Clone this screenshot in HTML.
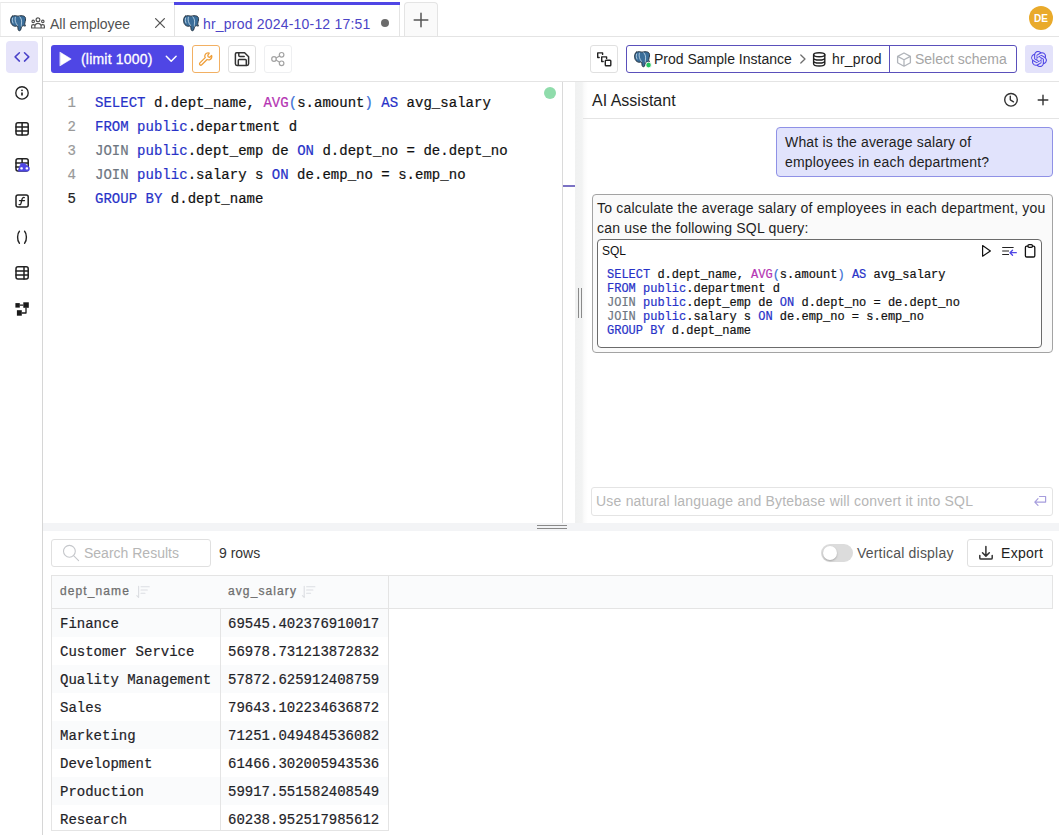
<!DOCTYPE html>
<html><head><meta charset="utf-8">
<style>
*{box-sizing:border-box;margin:0;padding:0}
html,body{width:1059px;height:835px;overflow:hidden;background:#fff;font-family:"Liberation Sans",sans-serif;color:#1e1e1e}
.a{position:absolute}
.mono{font-family:"Liberation Mono",monospace;-webkit-text-stroke:0.2px currentColor}
.ln{position:absolute;height:1px;background:#e4e4e4}
.vl{position:absolute;width:1px;background:#e4e4e4}
.btn{position:absolute;border:1px solid #e0e0e0;border-radius:3px;background:#fff}
.t{position:absolute;white-space:pre;line-height:1}
svg{position:absolute;overflow:visible}
.kw{color:#2832c8}
.fn{color:#b534b3}
.pn{color:#3b6fd6}
.gy{color:#6e7681}
.cell{font-size:14px;color:#1f2328}
</style></head><body>

<!-- ===== TAB BAR ===== -->
<div class="ln" style="left:0;top:36px;width:1059px"></div>
<!-- tab 1 -->
<div class="a" style="left:0px;top:2px;width:175px;height:34px;border:1px solid #e8e8e8;border-left-color:#f0f0f0;border-bottom:none;background:#fff"></div>
<div class="t" id="tab1" style="left:50px;top:17px;font-size:14px;color:#525252">All employee</div>
<!-- active tab -->
<div class="a" style="left:174px;top:2px;width:226px;height:34px;border-left:1px solid #e4e4e4;border-right:1px solid #e4e4e4;background:#fff"></div>
<div class="a" style="left:174px;top:2px;width:226px;height:3px;background:#4f46e5"></div>
<div class="t" id="tab2" style="left:203px;top:17px;font-size:14px;letter-spacing:0.2px;color:#4c44c6">hr_prod 2024-10-12 17:51</div>
<div class="a" style="left:381px;top:19px;width:8px;height:8px;border-radius:50%;background:#6b6b6b"></div>
<!-- plus tab -->
<div class="a" style="left:404px;top:2px;width:34px;height:34px;border:1px solid #e4e4e4;border-bottom:none;border-radius:4px 4px 0 0;background:#fafafa"></div>
<!-- avatar -->
<div class="a" style="left:1029px;top:6px;width:24px;height:24px;border-radius:50%;background:#e9aa2b"></div>
<div class="t" style="left:1029px;top:14px;width:24px;text-align:center;font-size:10px;font-weight:bold;color:#fff">DE</div>

<!-- ===== SIDEBAR ===== -->
<div class="vl" style="left:42px;top:37px;height:798px;background:#d6d6d6"></div>
<div class="a" style="left:6px;top:41px;width:32px;height:32px;border-radius:4px;background:#e6e4fa"></div>

<!-- ===== TOOLBAR ===== -->
<div class="ln" style="left:43px;top:81px;width:1016px"></div>
<div class="a" style="left:51px;top:45px;width:133px;height:28px;border-radius:3px;background:#4f46e5"></div>
<div class="t" id="runtxt" style="left:81px;top:52px;font-size:14px;letter-spacing:0.2px;-webkit-text-stroke:0.3px #fff;color:#fff">(limit 1000)</div>
<div class="btn" style="left:192px;top:45px;width:28px;height:28px;border-color:#f2b063"></div>
<div class="btn" style="left:228px;top:45px;width:28px;height:28px"></div>
<div class="btn" style="left:264px;top:45px;width:28px;height:28px;border-color:#eeeff1"></div>
<div class="btn" style="left:590px;top:45px;width:28px;height:28px"></div>
<div class="a" style="left:626px;top:45px;width:391px;height:28px;border:1px solid #5a50bb;border-radius:3px"></div>
<div class="vl" style="left:889px;top:46px;height:26px;background:#5a50bb"></div>
<div class="t" id="inst" style="left:654px;top:52px;font-size:14px;color:#1e1e1e">Prod Sample Instance</div>
<div class="t" id="db" style="left:832px;top:52px;font-size:14px;letter-spacing:0.2px;color:#1e1e1e">hr_prod</div>
<div class="t" id="schema" style="left:915px;top:52px;font-size:14px;color:#a5a5a5">Select schema</div>
<div class="a" style="left:1025px;top:45px;width:28px;height:28px;border-radius:3px;background:#e3e2fa"></div>

<!-- ===== EDITOR ===== -->
<div class="vl" style="left:562px;top:82px;height:441px;background:#dadada"></div>
<div class="a" style="left:563px;top:185px;width:12px;height:2px;background:#7b72c4"></div>
<div class="a" style="left:544px;top:87px;width:12px;height:12px;border-radius:50%;background:#8fdcab"></div>
<div class="a mono" style="left:55px;top:91px;font-size:14px;letter-spacing:0.02px;line-height:24px;white-space:pre">
<div style="position:absolute;left:0;top:0;width:21px;text-align:right;color:#999">1<br>2<br>3<br>4<br><span style="color:#222">5</span></div>
<div style="position:absolute;left:40px;top:0;color:#111"><span class="kw">SELECT</span> d.dept_name, <span class="fn">AVG</span><span class="pn">(</span>s.amount<span class="pn">)</span> <span class="kw">AS</span> avg_salary
<span class="kw">FROM</span> <span class="kw">public</span>.department d
<span class="gy">JOIN</span> <span class="kw">public</span>.dept_emp de <span class="kw">ON</span> d.dept_no = de.dept_no
<span class="gy">JOIN</span> <span class="kw">public</span>.salary s <span class="kw">ON</span> de.emp_no = s.emp_no
<span class="kw">GROUP</span> <span class="kw">BY</span> d.dept_name</div>
</div>

<!-- splitter vertical -->
<div class="a" style="left:575px;top:82px;width:13px;height:441px;background:linear-gradient(to right,#f0f1f1 0,#f2f3f3 7px,#fafafa 9px,#fff 13px)"></div>
<div class="a" style="left:578px;top:288px;width:1px;height:30px;background:#8a8a8a"></div>
<div class="a" style="left:581px;top:288px;width:1px;height:30px;background:#8a8a8a"></div>

<!-- ===== AI PANEL ===== -->
<div class="t" id="aih" style="left:592px;top:93px;font-size:16px;color:#1e1e1e">AI Assistant</div>
<div class="ln" style="left:583px;top:118px;width:476px"></div>
<div class="a" style="left:776px;top:127px;width:277px;height:50px;border:1px solid #8f91e6;border-radius:4px;background:#e1e3fc"></div>
<div class="a" style="left:785px;top:132px;font-size:14px;line-height:20px;letter-spacing:0.17px;color:#1e1e1e">What is the average salary of<br>employees in each department?</div>
<div class="a" style="left:592px;top:194px;width:461px;height:159px;border:1px solid #a3a3a3;border-radius:4px;background:#fafafa"></div>
<div class="a" style="left:597px;top:198px;font-size:14px;line-height:20px;letter-spacing:0.21px;color:#1e1e1e">To calculate the average salary of employees in each department, you<br>can use the following SQL query:</div>
<div class="a" style="left:597px;top:239px;width:445px;height:109px;border:1px solid #6b6b6b;border-radius:4px;background:#fff"></div>
<div class="t" style="left:602px;top:245px;font-size:12px;color:#111">SQL</div>
<div class="a mono" style="left:607px;top:268px;font-size:12px;line-height:14px;white-space:pre;color:#111"><span class="kw">SELECT</span> d.dept_name, <span class="fn">AVG</span><span class="pn">(</span>s.amount<span class="pn">)</span> <span class="kw">AS</span> avg_salary
<span class="kw">FROM</span> <span class="kw">public</span>.department d
<span class="gy">JOIN</span> <span class="kw">public</span>.dept_emp de <span class="kw">ON</span> d.dept_no = de.dept_no
<span class="gy">JOIN</span> <span class="kw">public</span>.salary s <span class="kw">ON</span> de.emp_no = s.emp_no
<span class="kw">GROUP</span> <span class="kw">BY</span> d.dept_name</div>
<div class="a" style="left:591px;top:487px;width:462px;height:29px;border:1px solid #e4e4e4;border-radius:3px;background:#fff"></div>
<div class="t" id="ph" style="left:596px;top:494px;font-size:14px;letter-spacing:0.21px;color:#b6b6b6">Use natural language and Bytebase will convert it into SQL</div>

<!-- splitter horizontal -->
<div class="a" style="left:43px;top:523px;width:1016px;height:8px;background:#f3f4f6"></div>
<div class="a" style="left:537px;top:525px;width:30px;height:1px;background:#8a8a8a"></div>
<div class="a" style="left:537px;top:528px;width:30px;height:1px;background:#8a8a8a"></div>

<!-- ===== RESULTS ===== -->
<div class="btn" style="left:51px;top:539px;width:160px;height:28px"></div>
<div class="t" id="srch" style="left:84px;top:546px;font-size:14px;color:#b6b6b6">Search Results</div>
<div class="t" id="rows" style="left:219px;top:546px;font-size:14px;color:#333333">9 rows</div>
<div class="a" style="left:821px;top:544px;width:32px;height:18px;border-radius:9px;background:#dcdcdc"></div>
<div class="a" style="left:823px;top:546px;width:14px;height:14px;border-radius:50%;background:#fff;box-shadow:0 1px 2px rgba(0,0,0,.25)"></div>
<div class="t" id="vd" style="left:857px;top:546px;font-size:14px;letter-spacing:0.2px;color:#525252">Vertical display</div>
<div class="btn" style="left:967px;top:539px;width:86px;height:28px"></div>
<div class="t" id="exp" style="left:1001px;top:546px;font-size:14px;letter-spacing:0.3px;color:#1e1e1e">Export</div>

<!-- table -->
<!--rowsbg-->
<div class="a" style="left:51px;top:609px;width:338px;height:222px;overflow:hidden">
<div class="a" style="left:0;top:0;width:338px;height:230px">
<div class="a" style="left:1px;top:0px;width:336px;height:28px;background:#fafbfc"></div>
<div class="a" style="left:1px;top:56px;width:336px;height:28px;background:#fafbfc"></div>
<div class="a" style="left:1px;top:112px;width:336px;height:28px;background:#fafbfc"></div>
<div class="a" style="left:1px;top:168px;width:336px;height:28px;background:#fafbfc"></div>
<div class="t mono cell" style="left:9px;top:8px">Finance</div>
<div class="t mono cell" style="left:177px;top:8px">69545.402376910017</div>
<div class="t mono cell" style="left:9px;top:36px">Customer Service</div>
<div class="t mono cell" style="left:177px;top:36px">56978.731213872832</div>
<div class="t mono cell" style="left:9px;top:64px">Quality Management</div>
<div class="t mono cell" style="left:177px;top:64px">57872.625912408759</div>
<div class="t mono cell" style="left:9px;top:92px">Sales</div>
<div class="t mono cell" style="left:177px;top:92px">79643.102234636872</div>
<div class="t mono cell" style="left:9px;top:120px">Marketing</div>
<div class="t mono cell" style="left:177px;top:120px">71251.049484536082</div>
<div class="t mono cell" style="left:9px;top:148px">Development</div>
<div class="t mono cell" style="left:177px;top:148px">61466.302005943536</div>
<div class="t mono cell" style="left:9px;top:176px">Production</div>
<div class="t mono cell" style="left:177px;top:176px">59917.551582408549</div>
<div class="t mono cell" style="left:9px;top:204px">Research</div>
<div class="t mono cell" style="left:177px;top:204px">60238.952517985612</div>
</div></div>
<div class="vl" style="left:220px;top:576px;height:254px"></div>
<div class="ln" style="left:51px;top:830px;width:338px"></div>

<div class="a" style="left:51px;top:575px;width:1002px;height:34px;border:1px solid #e4e4e4;background:#fafbfc"></div>
<div class="a" style="left:51px;top:608px;width:338px;height:223px;border:1px solid #e4e4e4;border-top:none"></div>

<div class="vl" style="left:388px;top:576px;height:33px"></div>
<div class="t" style="left:60px;top:585px;font-size:12px;letter-spacing:1.1px;-webkit-text-stroke:0.25px #6e6e6e;color:#6e6e6e">dept_name</div>
<div class="t" style="left:228px;top:585px;font-size:12px;letter-spacing:1.1px;-webkit-text-stroke:0.25px #6e6e6e;color:#6e6e6e">avg_salary</div>


<!-- ===== ICON OVERLAY ===== -->
<svg width="1059" height="835" viewBox="0 0 1059 835" style="left:0;top:0;pointer-events:none" fill="none" stroke-linecap="round" stroke-linejoin="round">
<defs>
<symbol id="pg" viewBox="0 0 16 16" overflow="visible">
<path d="M2.2,1.2 C4,0.3 6.5,0.6 8,1.2 C9.5,0.6 12.5,0.3 14.3,1.3 C15.8,2.2 15.8,4.5 15.2,6.5 C14.8,8 14.6,9 14.9,10 L15.5,11 C15,11.3 14.3,11 13.8,10.6 C13.2,11.2 12.2,11.3 11.5,11.2 C11.3,12.5 11.3,14 10.5,15.2 C9.8,16 8.5,15.9 8.2,14.8 C7.9,13.6 7.8,12 7.6,10.8 C6.8,11.2 5.5,11.4 4.4,11.2 C2.5,10.8 1,9 0.7,6.8 C0.4,4.5 0.8,2 2.2,1.2 Z" fill="#3a6d99" stroke="#1f2d3a" stroke-width="0.9"/>
<path d="M5.3,2.2 C4.6,4.8 5.4,8 7.4,10.4 M9.8,1.8 C11.4,3.2 12,6 11.4,9.2 C11.2,10.2 11.4,10.8 11.5,11.2 M2.6,3 C2,4.5 2.3,6.5 3,8" stroke="#d6e8f5" stroke-width="0.75" fill="none"/>
</symbol>
</defs>

<!-- tab1 -->
<use href="#pg" x="10" y="15" width="16" height="16"/>
<g stroke="#525252" stroke-width="1.2">
<circle cx="38" cy="19.8" r="1.9"/>
<circle cx="33.2" cy="21.4" r="1.2"/>
<circle cx="42.8" cy="21.4" r="1.2"/>
<path d="M31.6,28 H44.4 V26.2 C44.4,25.2 43.7,24.6 42.8,24.6 C42,24.6 41.4,24.9 41.1,25.4 C40.5,24.1 39.3,23.4 38,23.4 C36.7,23.4 35.5,24.1 34.9,25.4 C34.6,24.9 34,24.6 33.2,24.6 C32.3,24.6 31.6,25.2 31.6,26.2 Z M34.9,25.4 V28 M41.1,25.4 V28"/>
</g>
<path d="M155.6,18.6 L164.4,27.4 M164.4,18.6 L155.6,27.4" stroke="#555" stroke-width="1.3"/>
<!-- tab2 -->
<use href="#pg" x="183" y="15" width="16" height="16"/>
<!-- plus tab -->
<path d="M414.2,20 H427.8 M421,13.2 V26.8" stroke="#555" stroke-width="1.5"/>

<!-- sidebar -->
<path d="M19.4,52.7 L15.1,56.9 L19.4,61.1 M24.5,52.7 L28.8,56.9 L24.5,61.1" stroke="#4a42c9" stroke-width="1.5"/>
<g stroke="#222" stroke-width="1.35">
<circle cx="22" cy="92.9" r="6.2"/>
<path d="M22,92.6 V95.6" stroke-width="1.7" stroke-linecap="butt"/>
</g>
<circle cx="22" cy="90.3" r="0.9" fill="#222"/>
<g stroke="#222" stroke-width="1.5">
<rect x="16" y="122.8" width="12.2" height="12.2" rx="2"/>
<path d="M22.1,122.8 V135 M16,126.9 H28.2 M16,130.9 H28.2"/>
<rect x="16" y="158.8" width="12.2" height="12.2" rx="2"/>
<path d="M22.1,158.8 V163 M16,162.9 H28.2 M16,166.9 H19.5"/>
</g>
<path d="M18.2,170.6 L20.8,163.4 H24.8 L29.4,167.6 V169.2 C29.4,170.4 28.6,171.2 27.4,171.2 H19 Z" fill="#4f46e5" stroke="#4f46e5" stroke-width="0.6"/>
<rect x="20.3" y="167.2" width="2.5" height="2.3" rx="0.8" fill="#fff"/>
<rect x="25.6" y="167.2" width="2.5" height="2.3" rx="0.8" fill="#fff"/>
<g stroke="#222" stroke-width="1.5">
<rect x="16" y="194.9" width="12.2" height="12.2" rx="2"/>
<path d="M24.3,197.6 C23.2,197.2 22.4,197.8 22.1,199 L21,203.4 C20.7,204.6 20,205 19.1,204.5 M19.5,200.6 H24.5" stroke-width="1.3"/>
<path d="M19.4,231.2 C17.2,233.5 16.8,240.5 19.4,243.3 M24.6,231.2 C26.8,233.5 27.2,240.5 24.6,243.3" stroke-width="1.4"/>
<rect x="16" y="266.8" width="12.2" height="12.2" rx="2"/>
<path d="M24,266.8 V279 M16,270.9 H28.2 M16,274.9 H28.2"/>
</g>
<g fill="#1a1a1a">
<rect x="15.4" y="303.1" width="4.4" height="4.5"/>
<rect x="23.3" y="302.3" width="5.5" height="5.5"/>
<rect x="16.9" y="310.2" width="4.9" height="5.5"/>
</g>
<path d="M19.8,305.2 H23.3 M26,307.8 V313 H21.8" stroke="#1a1a1a" stroke-width="1.3" stroke-linecap="butt"/>

<!-- toolbar -->
<path d="M60.2,52.3 L71.2,59 L60.2,65.7 Z" fill="#fff" stroke="#fff" stroke-width="0.6"/>
<path d="M166.3,56.2 L171.2,61.2 L176.1,56.2" stroke="#fff" stroke-width="1.5"/>
<path d="M209.2,53.1 C207.4,52.4 205.4,53.4 204.9,55.3 C204.7,56.1 204.8,56.9 205.2,57.6 L199.9,62.9 C199.4,63.4 199.4,64.3 199.9,64.8 C200.4,65.3 201.3,65.3 201.8,64.8 L207.1,59.5 C207.8,59.9 208.6,60 209.4,59.8 C211.3,59.3 212.3,57.3 211.6,55.5 L209.8,57.3 L208.2,56.9 L207.8,55.3 Z" stroke="#ef9f3a" stroke-width="1.3"/>
<path d="M236.6,52.8 H244.6 L248.6,56.8 V63.8 C248.6,64.8 247.9,65.5 246.9,65.5 H237 C236,65.5 235.4,64.8 235.4,63.8 V54 C235.4,53.3 235.9,52.8 236.6,52.8 Z M238.8,52.8 V55.4 C238.8,56 239.2,56.4 239.9,56.4 H244.2 M238.3,65.5 V60.5 C238.3,60 238.7,59.6 239.2,59.6 H245.4 C245.9,59.6 246.3,60 246.3,60.5 V65.5" stroke="#333" stroke-width="1.5"/>
<g stroke="#a3a3a3" stroke-width="1.2">
<circle cx="281.6" cy="54.8" r="2.3"/>
<circle cx="281.6" cy="63.3" r="2.3"/>
<circle cx="274" cy="59" r="2.3"/>
<path d="M276,57.9 L279.6,55.9 M276,60.1 L279.6,62.2"/>
</g>
<g stroke="#222" stroke-width="1.4">
<path d="M602.6,54.4 V52.9 H597.7 V57.5 H599.2"/>
<path d="M606.6,58.4 V56.9 H601.7 V61.5 H603.2"/>
<rect x="605.3" y="60.3" width="5.5" height="5.5" rx="0.8"/>
</g>
<use href="#pg" x="634" y="51" width="16" height="16"/>
<circle cx="648.6" cy="65" r="2.8" fill="#22c55e" stroke="#fff" stroke-width="0.8"/>
<path d="M800.8,55 L805,59 L800.8,63" stroke="#6e6e6e" stroke-width="1.3"/>
<g stroke="#222" stroke-width="1.4">
<ellipse cx="819.2" cy="54.8" rx="5.6" ry="2"/>
<path d="M813.6,54.8 V63.8 C813.6,65 816.1,66 819.2,66 C822.3,66 824.8,65 824.8,63.8 V54.8 M813.6,57.9 C813.6,59.1 816.1,60 819.2,60 C822.3,60 824.8,59.1 824.8,57.9 M813.6,60.9 C813.6,62.1 816.1,63 819.2,63 C822.3,63 824.8,62.1 824.8,60.9"/>
</g>
<g stroke="#b0b4ba" stroke-width="1.3">
<path d="M904,53 L910.4,56.4 V62.8 L904,66.2 L897.6,62.8 V56.4 Z M897.6,56.4 L904,59.8 L910.4,56.4 M904,59.8 V66.2"/>
</g>
<g transform="translate(1031,51) scale(0.6667)"><path fill="#4f46e5" stroke="none" d="M22.2819 9.8211a5.9847 5.9847 0 0 0-.5157-4.9108 6.0462 6.0462 0 0 0-6.5098-2.9A6.0651 6.0651 0 0 0 4.9807 4.1818a5.9847 5.9847 0 0 0-3.9977 2.9 6.0462 6.0462 0 0 0 .7427 7.0966 5.98 5.98 0 0 0 .511 4.9107 6.051 6.051 0 0 0 6.5146 2.9001A5.9847 5.9847 0 0 0 13.2599 24a6.0557 6.0557 0 0 0 5.7718-4.2058 5.9894 5.9894 0 0 0 3.9977-2.9001 6.0557 6.0557 0 0 0-.7475-7.0729zm-9.022 12.6081a4.4755 4.4755 0 0 1-2.8764-1.0408l.1419-.0804 4.7783-2.7582a.7948.7948 0 0 0 .3927-.6813v-6.7369l2.02 1.1686a.071.071 0 0 1 .038.052v5.5826a4.504 4.504 0 0 1-4.4945 4.4944zm-9.6607-4.1254a4.4708 4.4708 0 0 1-.5346-3.0137l.142.0852 4.783 2.7582a.7712.7712 0 0 0 .7806 0l5.8428-3.3685v2.3324a.0804.0804 0 0 1-.0332.0615L9.74 19.9502a4.4992 4.4992 0 0 1-6.1408-1.6464zM2.3408 7.8956a4.485 4.485 0 0 1 2.3655-1.9728V11.6a.7664.7664 0 0 0 .3879.6765l5.8144 3.3543-2.0201 1.1685a.0757.0757 0 0 1-.071 0l-4.8303-2.7865A4.504 4.504 0 0 1 2.3408 7.872zm16.5963 3.8558L13.1038 8.364 15.1192 7.2a.0757.0757 0 0 1 .071 0l4.8303 2.7913a4.4944 4.4944 0 0 1-.6765 8.1042v-5.6772a.79.79 0 0 0-.407-.667zm2.0107-3.0231l-.142-.0852-4.7735-2.7818a.7759.7759 0 0 0-.7854 0L9.409 9.2297V6.8974a.0662.0662 0 0 1 .0284-.0615l4.8303-2.7866a4.4992 4.4992 0 0 1 6.6802 4.66zM8.3065 12.863l-2.02-1.1638a.0804.0804 0 0 1-.038-.0567V6.0742a4.4992 4.4992 0 0 1 7.3757-3.4537l-.142.0805L8.704 5.459a.7948.7948 0 0 0-.3927.6813zm1.0976-2.3654l2.602-1.4998 2.6069 1.4998v2.9994l-2.5974 1.4997-2.6067-1.4997Z"/></g>

<!-- AI header -->
<g stroke="#333" stroke-width="1.4">
<circle cx="1011" cy="99.8" r="6.3"/>
<path d="M1010.3,96.2 V99.8 L1013.5,101.8"/>
<path d="M1038.2,100 H1047.8 M1043,95.2 V104.8"/>
</g>
<!-- code block icons -->
<path d="M982.6,245.6 L990.4,250.9 L982.6,256.2 Z" stroke="#111" stroke-width="1.2"/>
<g stroke="#222" stroke-width="1.2" stroke-linecap="butt">
<path d="M1002.2,247.5 H1013.6 M1002.2,251 H1009 M1002.2,254.5 H1009"/>
</g>
<path d="M1016.3,252.7 H1010 M1012.5,250.2 L1010,252.7 L1012.5,255.2" stroke="#4f46e5" stroke-width="1.3"/>
<g stroke="#111" stroke-width="1.3">
<path d="M1027.6,246.2 H1026.7 C1025.9,246.2 1025.4,246.8 1025.4,247.5 V255.7 C1025.4,256.5 1025.9,257 1026.7,257 H1033.5 C1034.3,257 1034.8,256.5 1034.8,255.7 V247.5 C1034.8,246.8 1034.3,246.2 1033.5,246.2 H1032.6"/>
<rect x="1027.9" y="244.7" width="4.6" height="2.6" rx="1.2"/>
</g>
<!-- return icon -->
<path d="M1039.5,496.5 H1045.6 V502.1 H1034.8 M1038,498.7 L1034.8,502.1 L1038,505.4" stroke="#a69ddd" stroke-width="1.2"/>
<!-- search icon -->
<circle cx="69.4" cy="551.3" r="5.9" stroke="#c5c7cb" stroke-width="1.1"/>
<path d="M73.6,555.6 L78.6,560.6" stroke="#c5c7cb" stroke-width="1.1"/>
<!-- download icon -->
<path d="M985.9,546.6 V556 M982.5,552.7 L985.9,556.1 L989.3,552.7 M979.8,555.4 V558 C979.8,558.7 980.3,559.1 981,559.1 H991 C991.7,559.1 992.2,558.7 992.2,558 V555.4" stroke="#333" stroke-width="1.5"/>
<!-- sort icons -->
<g stroke="#dcdee2" stroke-width="1.1">
<path d="M138.6,586.2 V597.4 M136.8,595.6 L138.6,597.4 M141,586.7 H149.3 M141,590 H147.3 M141,593.3 H145"/>
<path d="M304.2,586.2 V597.4 M302.4,595.6 L304.2,597.4 M306.6,586.7 H314.9 M306.6,590 H312.9 M306.6,593.3 H310.6"/>
</g>
</svg>

</body></html>
